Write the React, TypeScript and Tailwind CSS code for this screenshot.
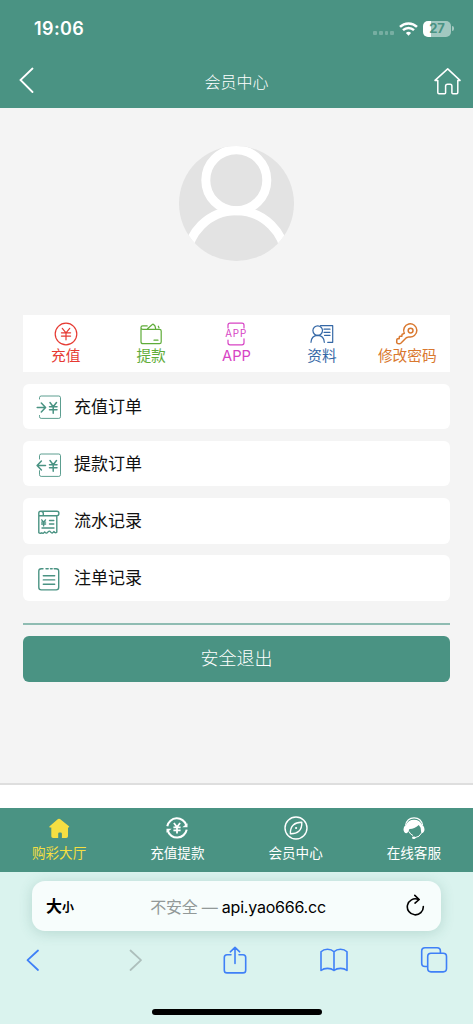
import React from 'react';

type IconProps = { className?: string };

const StatusBar: React.FC = () => (
  <div className="flex h-14 items-center justify-between pl-[34px] pr-[19px] pt-px">
    <span className="text-[18px] font-semibold leading-none tracking-[0.4px]">19:06</span>
    <div className="flex items-center">
      <div className="mr-[5px] mt-[9px] flex gap-[1.8px]">
        <i className="size-[3.8px] rounded-[1px] bg-white/25" />
        <i className="size-[3.8px] rounded-[1px] bg-white/25" />
        <i className="size-[3.8px] rounded-[1px] bg-white/25" />
        <i className="size-[3.8px] rounded-[1px] bg-white/25" />
      </div>
      <svg className="mr-[5px] h-[14px] w-[19px]" viewBox="0 0 19 14" fill="none" stroke="currentColor">
        <path d="M1 4.9a12.2 12.2 0 0 1 17 0" strokeWidth="2.5" />
        <path d="M4 8.2a7.9 7.9 0 0 1 11 0" strokeWidth="2.4" />
        <path d="M9.5 13.7 6.9 11a3.8 3.8 0 0 1 5.2 0z" fill="currentColor" stroke="none" />
      </svg>
      <div className="flex h-4 w-7 items-center justify-center rounded-[5px] bg-linear-to-r from-white from-28% to-[#a2c8c0] to-28% text-[13px] font-bold leading-none text-[#4a9383]">
        27
      </div>
      <i className="ml-px h-[5px] w-[2px] rounded-r-full bg-white/50" />
    </div>
  </div>
);

const Header: React.FC = () => (
  <header className="h-[108px] shrink-0 bg-[#4a9383] text-white">
    <StatusBar />
    <div className="flex h-[52px] items-center justify-between pl-[19px] pr-[12px]">
      <svg className="mb-[4px] h-[26px] w-[28px]" viewBox="0 0 28 26" fill="none" stroke="currentColor" strokeWidth="1.8">
        <path d="M13.5 1.5 1.5 13l12 12" strokeLinecap="round" />
      </svg>
      <h1 className="-ml-[7px] text-[16px] font-light leading-none">会员中心</h1>
      <svg className="mb-[3px] h-[28px] w-[28px]" viewBox="0 0 28 28" fill="none" stroke="currentColor" strokeWidth="1.5" strokeLinejoin="round" strokeLinecap="round">
        <path d="M4.8 13.4H2L14.7 1.9 27 13.4h-2.2v12.2q0 1.2-1.2 1.2h-3.7q-1 0-1-1v-6.7q0-1.8-1.7-1.8h-2.6q-2 0-2 1.8v6.7q0 1-1 1H6q-1.2 0-1.2-1.2z" />
      </svg>
    </div>
  </header>
);

const Avatar: React.FC = () => (
  <svg className="mx-auto h-[115px] w-[115px] rounded-full bg-[#e3e3e3]" viewBox="0 0 115 115" fill="none" stroke="white">
    <circle cx="57.3" cy="34.2" r="30.5" strokeWidth="9" />
    <circle cx="57.3" cy="114.3" r="49.6" strokeWidth="9" />
  </svg>
);

const iconProps = {
  fill: 'none',
  stroke: 'currentColor',
  strokeWidth: 1.2,
  strokeLinecap: 'round',
  strokeLinejoin: 'round',
} as const;

const RechargeIcon: React.FC<IconProps> = ({ className }) => (
  <svg className={className} viewBox="0 0 24 24" {...iconProps}>
    <circle cx="12" cy="12" r="10.8" />
    <path d="m8.3 6.3 3.7 4.5 3.7-4.5M12 10.8v7M7.4 10.8h9.2M7.4 14.1h9.2" />
  </svg>
);

const WalletIcon: React.FC<IconProps> = ({ className }) => (
  <svg className={className} viewBox="0 0 24 24" {...iconProps}>
    <path d="M2 5.2v14.5q0 2 2 2h16.5q1.7 0 1.7-1.7V9q0-1.7-1.7-1.7H4Q2 7.3 2 5.4q0-1.5 1.7-1.5h4.5M8.5 6.8l4.8-4.3q.7-.7 1.3 0L16 4l.6 2.5M19.3 4.2l.7 1.6M15 18.2h4" />
  </svg>
);

const AppIcon: React.FC<IconProps> = ({ className }) => (
  <svg className={`overflow-visible ${className}`} viewBox="0 0 24 24" {...iconProps}>
    <path d="M4 6V3.2q0-2 2-2h12q2 0 2 2V6M4 18v2.8q0 2 2 2h12q2 0 2-2v-4" />
    <text x="12.2" y="15.2" textAnchor="middle" fontSize="9.8" letterSpacing=".9" fill="currentColor" stroke="none">APP</text>
  </svg>
);

const ProfileIcon: React.FC<IconProps> = ({ className }) => (
  <svg className={className} viewBox="0 0 24 24" {...iconProps}>
    <circle cx="7.7" cy="8.6" r="4.8" />
    <path d="M1 20.3q.3-6.7 6.7-6.9 6.3.2 6.6 6.9M10.5 3.7h12.2v16.6h-5M14 7.2h6M14 10.3h6M14.6 13.4H20" />
  </svg>
);

const KeyIcon: React.FC<IconProps> = ({ className }) => (
  <svg className={className} viewBox="0 0 24 24" {...iconProps}>
    <path d="M9.3 11.3a6.6 6.6 0 1 1 4.6 3.6L11.3 15.8 5.8 21.2q-.8.7-1.5.6l-1.7-.4q-.8-.3-.9-1.1l.1-2.6q.1-.8.9-1l1.5.1.1-1.8q.2-.8 1-.8h1.6l.1-1.5q.1-.7.8-.7z" strokeWidth="1.5" />
    <circle cx="15.6" cy="8.6" r="2.4" strokeWidth="1.5" />
  </svg>
);

const InIcon: React.FC<IconProps> = ({ className }) => (
  <svg className={className} viewBox="0 0 26 26" {...iconProps}>
    <path d="M3.5 5V3.7Q3.5 2 5.2 2h17.6q1.7 0 1.7 1.7v19q0 1.7-1.7 1.7H5.2q-1.7 0-1.7-1.7v-1.2" strokeWidth=".9" />
    <path d="M1.2 13.5h8M5.3 9l4.3 4.5L5.3 18M14 8.5l3.2 4.2 3.3-4.2M17.2 12.7v6.5M13.5 12.7h7.5M13.5 15.7h7.5" strokeWidth="1.5" />
  </svg>
);

const OutIcon: React.FC<IconProps> = ({ className }) => (
  <svg className={className} viewBox="0 0 26 26" {...iconProps}>
    <path d="M3.5 7V3.7Q3.5 2 5.2 2h17.6q1.7 0 1.7 1.7v19q0 1.7-1.7 1.7H5.2q-1.7 0-1.7-1.7v-4" strokeWidth=".9" />
    <path d="M1.5 13.5h8M5.4 9l-4.3 4.5L5.4 18M14 8.5l3.2 4.2 3.3-4.2M17.2 12.7v6.5M13.5 12.7h7.5M13.5 15.7h7.5" strokeWidth="1.5" />
  </svg>
);

const BillIcon: React.FC<IconProps> = ({ className }) => (
  <svg className={className} viewBox="0 0 26 26" {...iconProps} strokeWidth={1.4}>
    <path d="M20.8 7v16.2q-1.7 1.3-3-.7-1.6 2.6-3.1.6-1.5-2-3 .2-1.5 1.9-3-.4-1.5 2.2-3 .9-1.6 1-2.9-.1V4.2q0-2 1.9-2h16.2q2 0 2 2 0 2.6-2.3 2.6H7.3V4.4q0-2.2-2.3-2.2M3.2 6.8h4" />
    <path d="m5.7 10.9 1.9 2.2 1.9-2.2M7.6 13.1v3.8M5.6 13.1h4M5.6 15h4M13.5 11.5h4.3M13.5 15h4.3M6 19h12" />
  </svg>
);

const BetIcon: React.FC<IconProps> = ({ className }) => (
  <svg className={className} viewBox="0 0 26 26" {...iconProps} strokeWidth={1.4}>
    <path d="M7 2.8H5.3q-2.5 0-2.5 2.5v16q0 2.6 2.5 2.6h14.9q2.5 0 2.5-2.6v-16q0-2.5-2.5-2.5h-2M10 2.8h2.2M14.5 2.8h1.7M7.3 9.8h11.4M7.3 13.9h11.4M7.3 18.2h11.4" />
  </svg>
);

const shortcuts = [
  { label: '充值', Icon: RechargeIcon, color: 'text-[#e63a32]' },
  { label: '提款', Icon: WalletIcon, color: 'text-[#5fac39]' },
  { label: 'APP', Icon: AppIcon, color: 'text-[#d743c4]' },
  { label: '资料', Icon: ProfileIcon, color: 'text-[#3568a6]' },
  { label: '修改密码', Icon: KeyIcon, color: 'text-[#d9782f]' },
];

const records = [
  { label: '充值订单', Icon: InIcon },
  { label: '提款订单', Icon: OutIcon },
  { label: '流水记录', Icon: BillIcon },
  { label: '注单记录', Icon: BetIcon },
];

const HallIcon: React.FC<IconProps> = ({ className }) => (
  <svg className={className} viewBox="0 0 24 24" fill="currentColor">
    <path d="M11 3.1q1-.8 2 0l9 7.1q.7.8-.3 1.2H21v8.8q0 1.8-1.8 1.8h-4.3v-4.2q0-1.4-1.3-1.4h-1.2q-1.2 0-1.2 1.4V22H6.1q-1.8 0-1.8-1.8v-8.8h-1.5q-1-.4-.2-1.2z" />
  </svg>
);

const ExchangeIcon: React.FC<IconProps> = ({ className }) => (
  <svg className={className} viewBox="0 0 24 24" fill="none" stroke="currentColor" strokeWidth="2.1">
    <path d="M2.3 10.2A9.8 9.8 0 0 1 21.3 9.3M21.7 13.6A9.8 9.8 0 0 1 2.7 14.6" />
    <path d="M22.5 7.2v4h-5.2zM1.5 16.8v-4h5.2z" fill="currentColor" stroke="none" />
    <path d="m8.9 7 3.1 4L15.1 7M12 11v6.4M8.4 11.4h7.2M8.4 14.3h7.2" strokeWidth="1.8" />
  </svg>
);

const CompassIcon: React.FC<IconProps> = ({ className }) => (
  <svg className={className} viewBox="0 0 24 24" fill="none" stroke="currentColor" strokeWidth="1.4">
    <circle cx="12" cy="12" r="11" />
    <path d="M17.8 6.3q.3 6-3 9-3 2.7-8.4 2.5-.3-5.9 2.9-8.8 3-2.8 8.5-2.7z" strokeLinejoin="round" />
    <circle cx="12.1" cy="12" r="1.1" fill="currentColor" stroke="none" />
  </svg>
);

const ServiceIcon: React.FC<IconProps> = ({ className }) => (
  <svg className={className} viewBox="0 0 24 24" fill="none" stroke="currentColor">
    <path d="M3.5 9.5Q5 1.9 12.1 1.9t8.6 7.6" strokeWidth="1.2" />
    <path d="M4.5 17.3q-3-.5-3-4.1 0-3.2 2.3-4Q6.4 3.8 12 3.8t8.3 5.4q2.2.8 2.2 4 0 3.6-3.2 4.1l-.7-5.5-1.8-2.7q-4.7 4.2-9.4 4-.4 3.3-2.9 4.2z" fill="currentColor" stroke="none" />
    <path d="M7 15.5q1.2 3 4 4M19.5 17q-1.7 4-6.6 4.7" strokeWidth="1" />
    <ellipse cx="11.8" cy="21.7" rx="1.8" ry="1.2" fill="currentColor" stroke="none" />
  </svg>
);

const tabs = [
  { label: '购彩大厅', Icon: HallIcon, color: 'text-[#f5df42]' },
  { label: '充值提款', Icon: ExchangeIcon, color: 'text-white' },
  { label: '会员中心', Icon: CompassIcon, color: 'text-white' },
  { label: '在线客服', Icon: ServiceIcon, color: 'text-white' },
];

const BrowserBar: React.FC = () => (
  <footer className="flex h-[152px] flex-col bg-[#daf3ee] pt-[9px]">
    <div className="mx-8 flex h-[50px] shrink-0 items-center justify-between rounded-[13px] bg-[#f7fdfc] pl-[14px] pr-[15px] text-black shadow-[0_2px_14px_rgba(40,110,95,0.2)]">
      <span className="w-[50px] text-[16px] font-bold leading-none">
        大<span className="text-[12px]">小</span>
      </span>
      <span className="mt-px pr-[26px] text-[16px] leading-none tracking-[-0.22px]">
        <span className="text-[#929998]">不安全 — </span>api.yao666.cc
      </span>
      <svg className="mb-[3px] h-[24px] w-[20px]" viewBox="0 0 20 24" fill="none" stroke="currentColor" strokeWidth="1.6" strokeLinecap="round" strokeLinejoin="round">
        <path d="M17.3 13.5A8 8 0 1 1 12 6.3M8.8 2.4l4.4 4.1-4.2 3.6" />
      </svg>
    </div>
    <nav className="flex h-[58px] items-center justify-between pl-[25px] pr-[25px] text-[#3f80f7]">
      <svg className="h-[28px] w-[16px]" viewBox="0 0 16 28" {...iconProps} strokeWidth={1.8}>
        <path d="M13 4.5 2.5 14.2 13 24" />
      </svg>
      <svg className="ml-[7px] h-[28px] w-[16px] text-[#adbfbc]" viewBox="0 0 16 28" {...iconProps} strokeWidth={1.8}>
        <path d="m2.5 4.5 10.5 9.7L2.5 24" />
      </svg>
      <svg className="-ml-[2px] h-[28px] w-[24px]" viewBox="0 0 24 28" {...iconProps} strokeWidth={1.6}>
        <path d="M8 8.8H4q-2.7 0-2.7 2.7v12.7q0 2.7 2.7 2.7h16q2.7 0 2.7-2.7V11.5q0-2.7-2.7-2.7h-4M12 17.5V1.5M7.3 5.8 12 1.3l4.7 4.5" />
      </svg>
      <svg className="-ml-[8px] h-[28px] w-[30px]" viewBox="0 0 30 28" {...iconProps} strokeWidth={1.6}>
        <path d="M15 5.8Q12.5 3.3 8.5 3.3T2 5.8v18.7q2.5-2.1 6.5-2.1t6.5 2.1zM15 5.8q2.5-2.5 6.5-2.5T28 5.8v18.7q-2.5-2.1-6.5-2.1T15 24.5z" />
      </svg>
      <svg className="-ml-[9px] h-[28px] w-[28px]" viewBox="0 0 28 28" {...iconProps} strokeWidth={1.6}>
        <path d="M7.3 20.5H5q-3.3 0-3.3-3.3V5Q1.7 1.7 5 1.7h12.1q3.3 0 3.3 3.3v2.3" />
        <rect x="7.7" y="7.3" width="18.8" height="18.6" rx="3.3" />
      </svg>
    </nav>
    <div className="mx-auto mt-[20px] h-[6px] w-[170px] rounded-full bg-black" />
  </footer>
);

export default function App() {
  return (
    <div className="flex h-[1024px] w-full flex-col overflow-hidden bg-[#f4f4f4] font-['Inter','Noto_Sans_CJK_SC',sans-serif]">
      <Header />
      <main className="h-[677px] border-b-2 border-[#dedede] px-[23px] pt-[37.5px]">
        <Avatar />
        <section className="mt-[54.5px] grid h-[57px] grid-cols-5 bg-white">
          {shortcuts.map(({ label, Icon, color }) => (
            <a key={label} className={`flex flex-col items-center pt-[7px] ${color}`}>
              <Icon className="size-6" />
              <span className="mt-[2px] whitespace-nowrap text-[14.7px] leading-[17px]">{label}</span>
            </a>
          ))}
        </section>
        <ul className="mt-[11.5px] flex flex-col gap-[11.5px]">
          {records.map(({ label, Icon }) => (
            <li key={label} className="flex h-[45.7px] items-center rounded-[6px] bg-white pl-[13px] text-[17px] text-[#111]">
              <Icon className="mt-[2px] size-[26px] text-[#4a9383]" />
              <span className="ml-[12px] mt-[2px] leading-none">{label}</span>
            </li>
          ))}
        </ul>
        <hr className="mt-[22.5px] border-t-2 border-[#8fbcb2]" />
        <button className="mt-[11px] flex h-[46px] w-full items-center justify-center rounded-[6px] bg-[#4a9383] text-[18px] font-light leading-none text-white">
          安全退出
        </button>
      </main>
      <div className="h-[23px] shrink-0 bg-white" />
      <nav className="grid h-16 shrink-0 grid-cols-4 bg-[#4a9383]">
        {tabs.map(({ label, Icon, color }) => (
          <a key={label} className={`flex flex-col items-center pt-[8px] ${color}`}>
            <Icon className="size-6" />
            <span className="mt-[5px] text-[13.6px] leading-[16px]">{label}</span>
          </a>
        ))}
      </nav>
      <BrowserBar />
    </div>
  );
}
